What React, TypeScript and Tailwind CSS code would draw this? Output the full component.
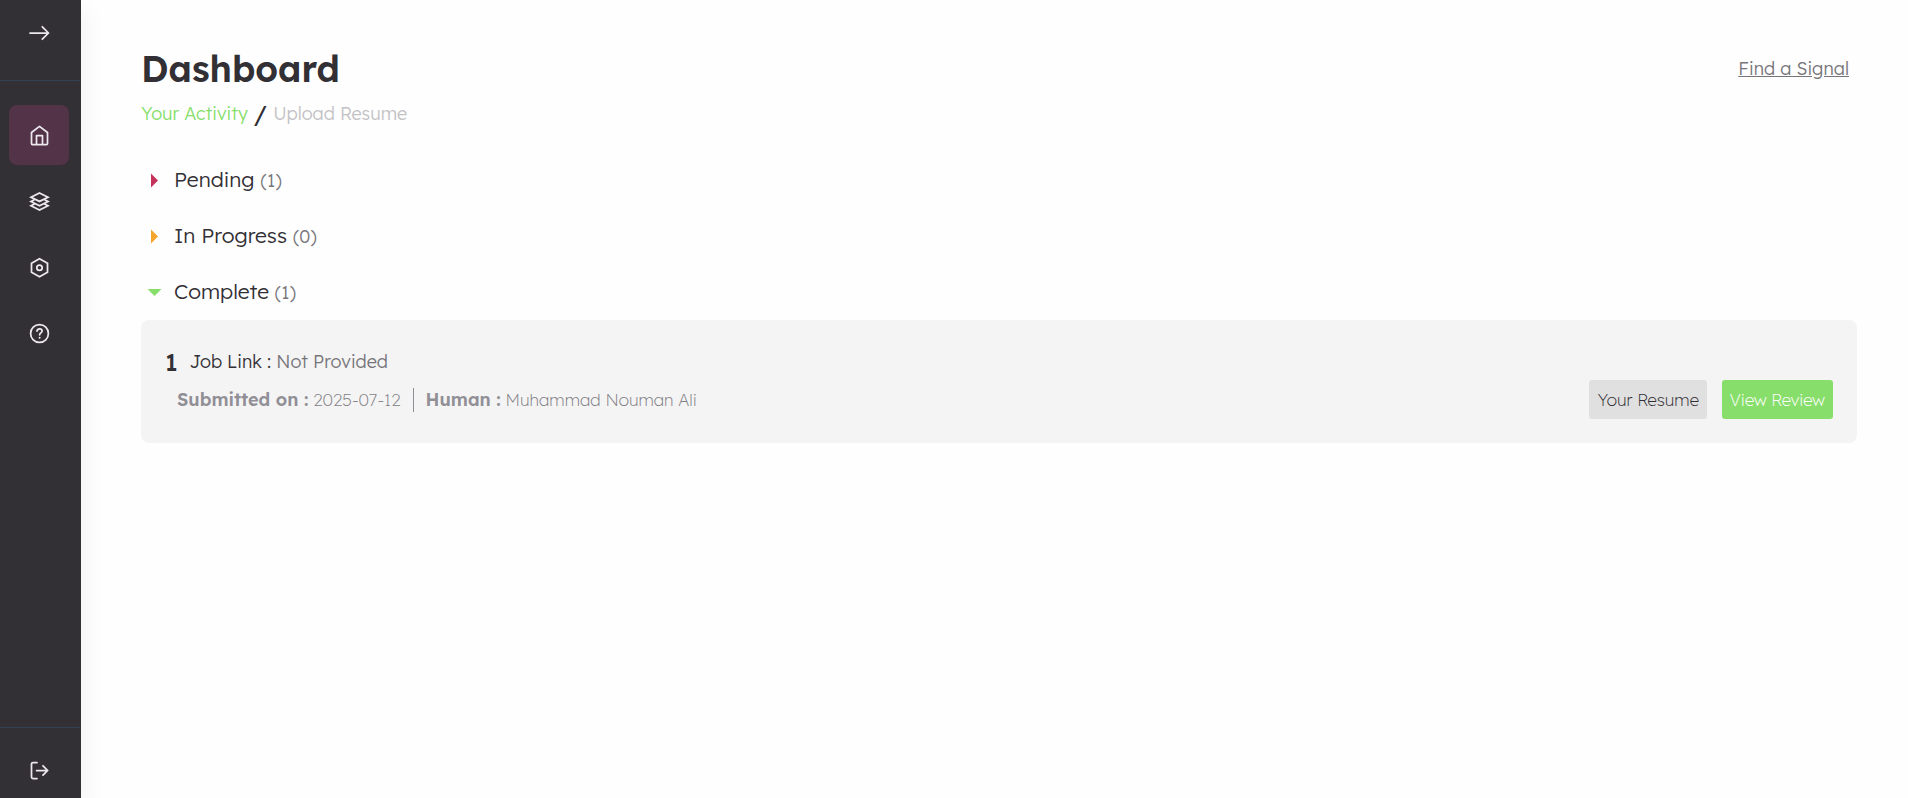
import { useState, type ReactNode } from "react";
import clsx from "clsx";

function Icon({ children }: { children: ReactNode }) {
  return (
    <svg
      width="24"
      height="24"
      viewBox="0 0 24 24"
      fill="none"
      stroke="currentColor"
      strokeWidth="1.75"
      strokeLinecap="round"
      strokeLinejoin="round"
      aria-hidden="true"
    >
      {children}
    </svg>
  );
}

const NAV_ITEMS = [
  {
    label: "Dashboard",
    icon: <path d="M4.500 20.500V9.500L12.500 3.400 20.500 9.500v11a1 1 0 0 1-1 1h-14a1 1 0 0 1-1-1ZM9.500 21.300v-8.800h6v8.800" />,
  },
  {
    label: "Signals",
    icon: (
      <path
        strokeLinejoin="miter"
        d="M12.500 4 21 8.200 12.500 12.400 4 8.200ZM6.900 11 4 12.500l8.500 4.200 8.500-4.200-2.900-1.500M6.900 15.300 4 16.800l8.500 4.200 8.500-4.200-2.900-1.500"
      />
    ),
  },
  {
    label: "Settings",
    icon: (
      <>
        <path strokeLinejoin="miter" d="M12.500 3.700 20.500 8.200v9l-8 4.500-8-4.500v-9Z" />
        <circle cx="12.500" cy="12.700" r="2.700" />
      </>
    ),
  },
  {
    label: "Help",
    icon: (
      <>
        <circle cx="12.500" cy="12.500" r="8.900" />
        <path d="M10 10.100c.2-1.500 1.200-2.300 2.600-2.300s2.500.9 2.500 2.200c0 1.800-2.500 1.900-2.500 3.800" />
        <path strokeWidth="2" d="M12.600 16.700v.1" />
      </>
    ),
  },
];

function Sidebar() {
  return (
    <aside className="flex w-[81px] shrink-0 flex-col bg-[#322f35] pr-[3px] text-[#ece8ee] shadow-[4px_10px_24px_rgba(0,0,0,0.05)]">
      <div className="-mr-0.5 flex h-[81px] justify-center border-b border-[#343f4f] pt-[21px]">
        <button type="button" aria-label="Expand menu" className="h-6">
          <Icon>
            <path d="M2 12h18.500M14.300 5.800 20.500 12l-6.200 6.200" />
          </Icon>
        </button>
      </div>

      <nav className="flex flex-col items-center gap-1.5 pt-6">
        {NAV_ITEMS.map((item, i) => (
          <a
            key={item.label}
            href="#"
            aria-label={item.label}
            className={clsx(
              "flex size-[60px] items-center justify-center rounded-lg",
              i === 0 && "bg-[#523347]"
            )}
          >
            <Icon>{item.icon}</Icon>
          </a>
        ))}
      </nav>

      <div className="-mr-0.5 mt-auto flex h-[71px] justify-center border-t border-[#343f4f] pt-[30px]">
        <button type="button" aria-label="Log out" className="h-6">
          <Icon>
            <path d="M9 4.500H5A1.500 1.500 0 0 0 3.500 6v13A1.500 1.500 0 0 0 5 20.500h4M8.500 12.500h11M15 7.800l4.700 4.700-4.700 4.700" />
          </Icon>
        </button>
      </div>
    </aside>
  );
}

type SectionProps = {
  title: string;
  count: number;
  color: string;
  defaultOpen?: boolean;
  children?: ReactNode;
};

function Section({ title, count, color, defaultOpen = false, children }: SectionProps) {
  const [open, setOpen] = useState(defaultOpen);

  return (
    <section>
      <button
        type="button"
        aria-expanded={open}
        onClick={() => setOpen(!open)}
        className="flex h-14 items-center gap-3 pl-1.5 text-[21px] font-light text-[#322f35]"
      >
        <svg width="15" height="15" viewBox="0 0 15 15" className={color} fill="currentColor" aria-hidden="true">
          {open ? <path d="M.5 4h14L7.500 11Z" /> : <path d="M4 .5v14L11 7.500Z" />}
        </svg>
        <span>
          {title} <span className="text-lg text-[#77757a]">({count})</span>
        </span>
      </button>
      {open && children}
    </section>
  );
}

function ReviewCard() {
  return (
    <article className="rounded-lg bg-[#f4f4f4] px-6 pt-7 pb-6">
      <div className="flex h-7 items-center gap-3 text-lg font-light">
        <span className="text-2xl font-medium text-[#322f35]">1</span>
        <p className="text-[#77757a]">
          <span className="text-[#322f35]">Job Link :</span> Not Provided
        </p>
      </div>
      <div className="mt-1 flex items-center justify-between">
        <div className="flex items-center pl-3 text-[17px] font-[230] text-[#807e85]">
          <p>
            <strong className="text-lg font-semibold text-[#918f96]">Submitted on :</strong> 2025-07-12
          </p>
          <span className="mx-3 h-6 w-px bg-[#918f96]" />
          <p>
            <strong className="text-lg font-semibold text-[#918f96]">Human :</strong> Muhammad Nouman Ali
          </p>
        </div>
        <div className="flex gap-[15px] text-[17px] font-[250]">
          <button type="button" className="h-[39px] rounded-[3px] bg-[#e0e0e0] px-2 text-[#322f35]">
            Your Resume
          </button>
          <button type="button" className="h-[39px] rounded-[3px] bg-[#87de6b] px-2 text-white">
            View Review
          </button>
        </div>
      </div>
    </article>
  );
}

export default function App() {
  return (
    <div className="flex min-h-screen bg-[#fefefe] font-['Lexend','Inter',sans-serif]">
      <Sidebar />
      <main className="min-w-0 flex-1 pt-[49px] pr-[51px] pl-[60px]">
        <header className="flex items-center justify-between pr-2">
          <h1 className="text-4xl font-semibold text-[#322f35]">Dashboard</h1>
          <a href="#" className="text-lg font-light text-[#77757a] underline">
            Find a Signal
          </a>
        </header>

        <nav aria-label="Activity" className="mt-[9px] flex h-8 items-center gap-1.5 text-lg font-light">
          <a href="#" className="text-[#87de6b]">
            Your Activity
          </a>
          <span className="text-2xl font-normal text-[#322f35]">/</span>
          <a href="#" className="text-[#c3c2c5]">
            Upload Resume
          </a>
        </nav>

        <div className="mt-[22px]">
          <Section title="Pending" count={1} color="text-[#c4315b]" />
          <Section title="In Progress" count={0} color="text-[#f5a42c]" />
          <Section title="Complete" count={1} color="text-[#87de6b]" defaultOpen>
            <ReviewCard />
          </Section>
        </div>
      </main>
    </div>
  );
}
